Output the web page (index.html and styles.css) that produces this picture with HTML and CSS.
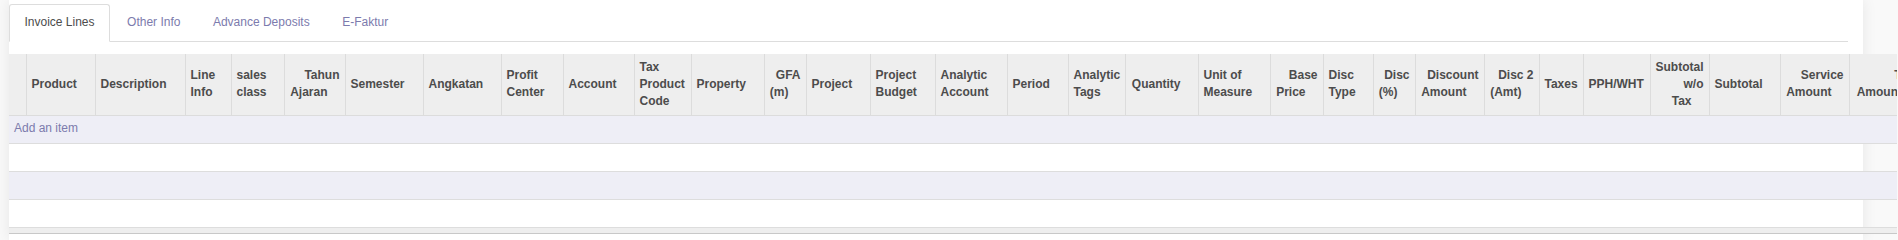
FILE: index.html
```html
<!DOCTYPE html>
<html lang="en">
<head>
    <meta charset="UTF-8">
    <title>Invoice Lines</title>
    <link rel="stylesheet" href="styles.css">
</head>
<body>
    <div class="sheet">
        <ul class="tabs">
            <li class="active"><a href="#lines">Invoice Lines</a></li>
            <li><a href="#other">Other Info</a></li>
            <li><a href="#deposits">Advance Deposits</a></li>
            <li><a href="#efaktur">E-Faktur</a></li>
        </ul>

        <div class="lines" id="lines">
            <table>
                <colgroup>
                    <col class="c-sel">
                    <col class="c-product">
                    <col class="c-desc">
                    <col class="c-lineinfo">
                    <col class="c-class">
                    <col class="c-tahun">
                    <col class="c-semester">
                    <col class="c-angkatan">
                    <col class="c-profit">
                    <col class="c-account">
                    <col class="c-taxcode">
                    <col class="c-property">
                    <col class="c-gfa">
                    <col class="c-project">
                    <col class="c-budget">
                    <col class="c-analytic">
                    <col class="c-period">
                    <col class="c-tags">
                    <col class="c-qty">
                    <col class="c-uom">
                    <col class="c-price">
                    <col class="c-disctype">
                    <col class="c-disc">
                    <col class="c-discamt">
                    <col class="c-disc2">
                    <col class="c-taxes">
                    <col class="c-pph">
                    <col class="c-untaxed">
                    <col class="c-subtotal">
                    <col class="c-service">
                    <col class="c-taxamt">
                </colgroup>
                <thead>
                    <tr>
                        <th></th>
                        <th>Product</th>
                        <th>Description</th>
                        <th>Line<br>Info</th>
                        <th>sales<br>class</th>
                        <th class="num">Tahun<br>Ajaran</th>
                        <th>Semester</th>
                        <th>Angkatan</th>
                        <th>Profit<br>Center</th>
                        <th>Account</th>
                        <th>Tax<br>Product<br>Code</th>
                        <th>Property</th>
                        <th class="num">GFA<br>(m)</th>
                        <th>Project</th>
                        <th>Project<br>Budget</th>
                        <th>Analytic<br>Account</th>
                        <th>Period</th>
                        <th>Analytic<br>Tags</th>
                        <th class="num">Quantity</th>
                        <th>Unit of<br>Measure</th>
                        <th class="num">Base<br>Price</th>
                        <th>Disc<br>Type</th>
                        <th class="num">Disc<br>(%)</th>
                        <th class="num">Discount<br>Amount</th>
                        <th class="num">Disc 2<br>(Amt)</th>
                        <th>Taxes</th>
                        <th>PPH/WHT</th>
                        <th class="num">Subtotal<br>w/o<br>Tax</th>
                        <th class="num">Subtotal</th>
                        <th class="num">Service<br>Amount</th>
                        <th class="num">Tax<br>Amount</th>
                    </tr>
                </thead>
                <tbody>
                    <tr><td colspan="31"><a href="#" class="add-line">Add an item</a></td></tr>
                    <tr><td colspan="31"></td></tr>
                    <tr><td colspan="31"></td></tr>
                    <tr><td colspan="31"></td></tr>
                </tbody>
                <tfoot>
                    <tr><td colspan="31"></td></tr>
                </tfoot>
            </table>
        </div>
    </div>
</body>
</html>
```

FILE: styles.css
```css
body { margin: 0; background-color: #f9f9f9; font-family: "Liberation Sans", Arial, sans-serif; font-size: 12px; line-height: 1.42857; color: #4c4c4c; overflow: hidden; }

.sheet { margin-left: 9px; width: 1854px; height: 240px; padding-top: 4px; box-sizing: border-box; background-color: #fff; box-shadow: 0 0 14px rgba(0, 0, 0, 0.08); }

/* notebook tabs */
.tabs { display: flex; list-style: none; margin: 0 15px 0 0; padding: 0; border-bottom: 1px solid #ddd; }
.tabs li { margin-bottom: -1px; }
.tabs a { display: block; padding: 9px 14.5px 10px; margin-right: 1.5px; line-height: 17px; border: 1px solid transparent; border-radius: 3px 3px 0 0; color: #7c7bad; text-decoration: none; }
.tabs li.active a { color: #4c4c4c; background-color: #fff; border-color: #ddd #ddd transparent; }

/* one2many list */
.lines { width: 1888px; overflow: hidden; margin-top: 12px; }
.lines table { table-layout: fixed; width: 1910px; border-collapse: collapse; }
.lines thead tr { height: 61px; }
.lines th { padding: 0 5px; background-color: #eee; font-weight: bold; text-align: left; vertical-align: middle; white-space: nowrap; border-left: 1px solid #dcdcdc; border-bottom: 1px solid #dcdcdc; }
.lines th:first-child { border-left: none; }
.lines th.num { text-align: right; }
.lines th.num::after { content: ""; display: inline-block; width: 12px; }
.lines tbody td { height: 27px; padding: 0 5px; border-bottom: 1px solid #ddd; }
.lines tbody tr:nth-child(odd) td { background-color: #eeeef6; }
.lines tfoot td { height: 5px; padding: 0; background-color: #eee; border-top: 1px solid #ddd; border-bottom: 1px solid #c8c8c8; }
.add-line { color: #7c7bad; text-decoration: none; }

.c-sel { width: 17px; }
.c-product { width: 69px; }
.c-desc { width: 90px; }
.c-lineinfo { width: 46px; }
.c-class { width: 53px; }
.c-tahun { width: 61px; }
.c-semester { width: 78px; }
.c-angkatan { width: 78px; }
.c-profit { width: 62px; }
.c-account { width: 71px; }
.c-taxcode { width: 57px; }
.c-property { width: 73px; }
.c-gfa { width: 42px; }
.c-project { width: 64px; }
.c-budget { width: 65px; }
.c-analytic { width: 72px; }
.c-period { width: 61px; }
.c-tags { width: 57px; }
.c-qty { width: 73px; }
.c-uom { width: 72px; }
.c-price { width: 53px; }
.c-disctype { width: 50px; }
.c-disc { width: 42px; }
.c-discamt { width: 69px; }
.c-disc2 { width: 55px; }
.c-taxes { width: 44px; }
.c-pph { width: 67px; }
.c-untaxed { width: 59px; }
.c-subtotal { width: 71px; }
.c-service { width: 69px; }
.c-taxamt { width: 70px; }
```
